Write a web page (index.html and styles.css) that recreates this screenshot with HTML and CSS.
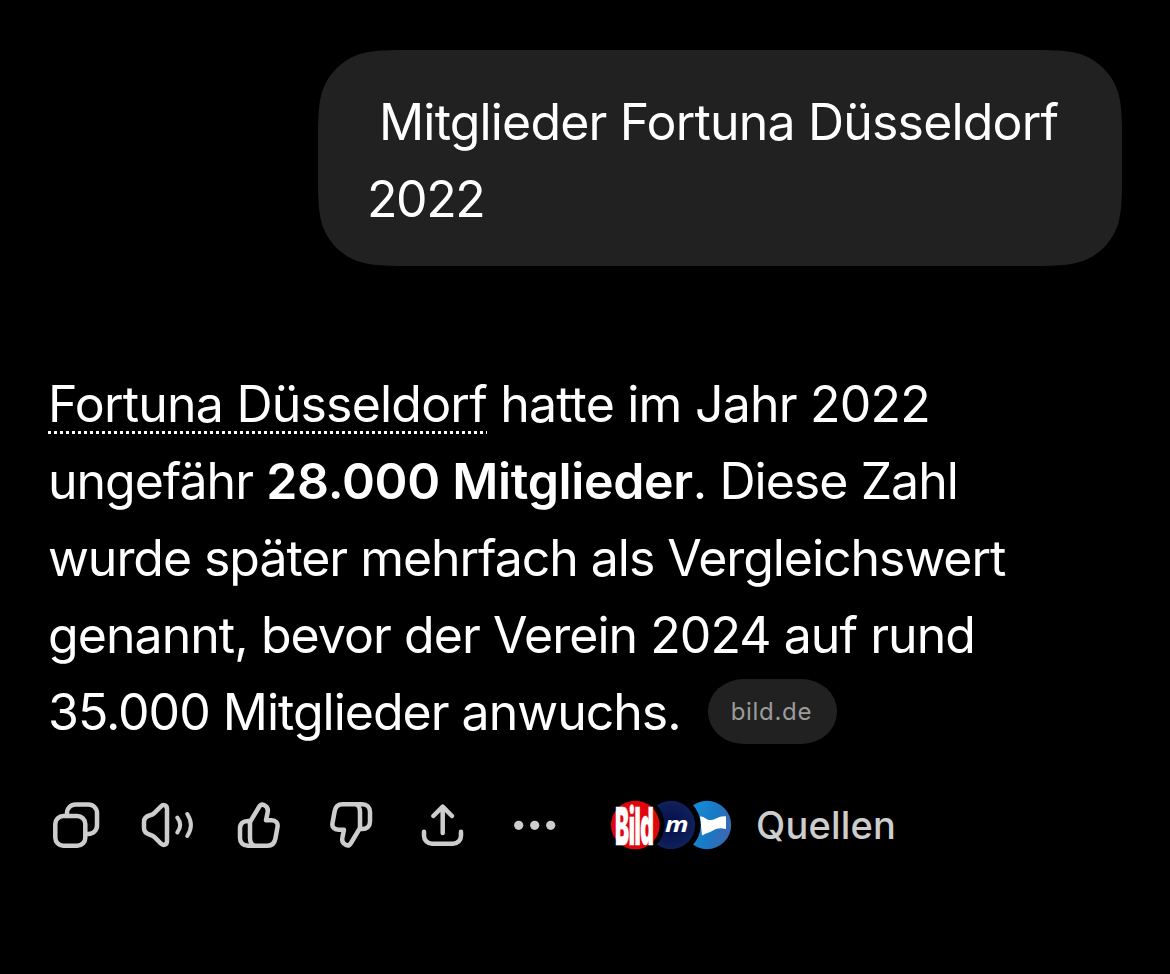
FILE: index.html
```html
<!DOCTYPE html>
<html lang="de">
<head>
    <meta charset="UTF-8">
    <title>Mitglieder Fortuna Düsseldorf 2022</title>
    <link rel="stylesheet" href="styles.css">
</head>
<body>
<div class="chat">
    <div class="question">
        <span class="line q1">Mitglieder Fortuna Düsseldorf</span>
        <span class="line q2">2022</span>
    </div>
    <div class="answer">
        <span class="line a1"><a class="entity">Fortuna Düsseldorf</a> hatte im Jahr 2022</span>
        <span class="line a2">ungefähr <b>28.000 Mitglieder</b>. Diese Zahl</span>
        <span class="line a3">wurde später mehrfach als Vergleichswert</span>
        <span class="line a4">genannt, bevor der Verein 2024 auf rund</span>
        <span class="line a5"><span>35.000 Mitglieder anwuchs.</span><a class="source">bild.de</a></span>
    </div>
    <div class="toolbar">
        <!-- copy -->
        <svg class="icon" viewBox="0 0 56 56">
            <rect x="7.3" y="19" width="30" height="29.7" rx="8"/>
            <path d="M19 19V16a8.5 8.5 0 0 1 8.5-8.5h13a8.5 8.5 0 0 1 8.5 8.5v12.5a8.5 8.5 0 0 1-8.5 8.5H38"/>
        </svg>
        <!-- read aloud -->
        <svg class="icon" viewBox="0 0 56 56">
            <path d="M27 12C27 8 23.5 6.8 20.5 9.8L14.5 15.8C13 17.3 12 17.8 10 18.3C6 19.3 4 21 4 25V31C4 35 6 36.7 10 37.7C12 38.2 13 38.7 14.5 40.2L20.5 46.2C23.5 49.2 27 48 27 44Z"/>
            <path class="wave" d="M37.3 20.5Q43 28 37.3 35.5M47.3 17Q54.5 28 47.3 39"/>
        </svg>
        <!-- thumbs up -->
        <svg class="icon" viewBox="0 0 56 56">
            <path d="M18 25L27 10C28.3 7.8 30 7 32 8C35.3 9.6 36.3 12.5 35.6 15.5L34 23.3H39.5C44 23.3 46.3 26 45.5 30L43.4 41.5C42.6 46 40 48.7 35.5 48.7H16C11 48.7 8 45.7 8 41V31.5C8 26.8 11 24 16 24H18V41C18 45 20 48.7 23.5 48.7"/>
        </svg>
        <!-- thumbs down -->
        <svg class="icon" viewBox="0 0 56 56">
            <path transform="rotate(180 27 28)" d="M18 25L27 10C28.3 7.8 30 7 32 8C35.3 9.6 36.3 12.5 35.6 15.5L34 23.3H39.5C44 23.3 46.3 26 45.5 30L43.4 41.5C42.6 46 40 48.7 35.5 48.7H16C11 48.7 8 45.7 8 41V31.5C8 26.8 11 24 16 24H18V41C18 45 20 48.7 23.5 48.7"/>
        </svg>
        <!-- share -->
        <svg class="icon" viewBox="0 0 56 56">
            <path d="M26.7 36V10M17.3 19L26.7 9.7L36 19M8 34.7V38.7A8 8 0 0 0 16 46.7H37A8 8 0 0 0 45 38.7V34.7"/>
        </svg>
        <!-- more -->
        <svg class="icon dots" viewBox="0 0 56 56">
            <circle cx="10.7" cy="28.3" r="4.6"/>
            <circle cx="26.7" cy="28.3" r="4.6"/>
            <circle cx="42.7" cy="28.3" r="4.6"/>
        </svg>
        <svg class="logos" viewBox="0 0 128 56">
            <defs>
                <linearGradient id="flagBg" x1="0" y1="0.3" x2="1" y2="0.6">
                    <stop offset="0" stop-color="#1593dc"/>
                    <stop offset="0.6" stop-color="#1879c6"/>
                    <stop offset="1" stop-color="#3f66b0"/>
                </linearGradient>
                <radialGradient id="mBg">
                    <stop offset="0" stop-color="#040d48"/>
                    <stop offset="1" stop-color="#10215c"/>
                </radialGradient>
            </defs>
            <circle cx="99" cy="28" r="24.2" fill="url(#flagBg)"/>
            <path fill="#fff" d="M92 19.5C97 19 98 23.5 103 23C109 22.5 111 18.5 118 19.5V32C113 30.5 109 31 105 33.5C101 36 98 36 94 38.5Z"/>
            <circle cx="63" cy="28" r="29.7" fill="#000"/>
            <circle cx="63" cy="28" r="24.2" fill="url(#mBg)"/>
            <text class="m-logo" x="57" y="35" textLength="23.5" lengthAdjust="spacingAndGlyphs">m</text>
            <circle cx="27.3" cy="28" r="29.2" fill="#000"/>
            <circle cx="27.3" cy="28" r="24.3" fill="#e1060d"/>
            <text class="bild-logo" transform="translate(7 47.5) scale(0.405 1)">Bild</text>
        </svg>
        <span class="sources">Quellen</span>
    </div>
</div>
</body>
</html>
```
FILE: styles.css
```css
*{
    margin: 0;
    padding: 0;
    box-sizing: border-box;
}
body{
    background-color: #000;
    color: #fff;
    font-family: Inter, "Liberation Sans", sans-serif;
    font-size: 50px;
    line-height: 77px;
}
.chat{
    display: flex;
    flex-direction: column;
    height: 974px;
    padding: 50px 48px 0;
    overflow: hidden;
}
.line{
    display: block;
    white-space: nowrap;
}
.question{
    align-self: flex-end;
    width: 804px;
    height: 216px;
    padding: 34px 49px 0;
    background-color: #212121;
    /*continuous corners*/
    clip-path: path("M96.3 0H707.7C735.4 0 749.3 0 764.2 4.7C780.5 10.7 793.3 23.5 799.3 39.8C804 54.7 804 68.6 804 96.3V119.7C804 147.4 804 161.3 799.3 176.2C793.3 192.5 780.5 205.3 764.2 211.3C749.3 216 735.4 216 707.7 216H96.3C68.6 216 54.7 216 39.8 211.3C23.5 205.3 10.7 192.5 4.7 176.2C0 161.3 0 147.4 0 119.7V96.3C0 68.6 0 54.7 4.7 39.8C10.7 23.5 23.5 10.7 39.8 4.7C54.7 0 68.6 0 96.3 0Z");
}
.q1{
    padding-left: 12px;
    letter-spacing: -0.82px;
}
.q2{
    letter-spacing: -1.4px;
}
.answer{
    margin-top: 100px;
}
.answer b{
    font-weight: 600;
    letter-spacing: -0.35px;
}
.a1{
    letter-spacing: -0.79px;
}
.a2{
    letter-spacing: -1.02px;
    word-spacing: 0.3px;
}
.a3{
    letter-spacing: -1.05px;
}
.a4{
    letter-spacing: -0.94px;
}
.a5{
    display: flex;
    align-items: center;
    letter-spacing: -1px;
}
.entity{
    background: repeating-linear-gradient(90deg, #fff 0 3px, transparent 3px 6px) 0 100% / 100% 3px no-repeat;
}
.source{
    width: 129px;
    height: 65px;
    margin: -2px 0 0 27px;
    padding-left: 23px;
    border-radius: 36px / 32px;
    background-color: #212121;
    color: #9b9b9b;
    font-size: 24px;
    line-height: 65px;
    letter-spacing: 0.7px;
}
.toolbar{
    display: flex;
    align-items: center;
    gap: 36px;
    height: 56px;
    margin-top: 46px;
}
.icon{
    flex: none;
    width: 56px;
    height: 56px;
    fill: none;
    stroke: #cdcdcd;
    stroke-width: 4.5;
    stroke-linecap: round;
    stroke-linejoin: round;
}
.wave{
    stroke-width: 4;
}
.dots{
    fill: #cdcdcd;
    stroke: none;
}
.logos{
    flex: none;
    width: 128px;
    height: 56px;
    margin-left: 8px;
    overflow: visible;
}
.m-logo{
    fill: #fff;
    font: italic bold 22px/1 "Open Sans", sans-serif;
}
.bild-logo{
    fill: #fff;
    stroke: #fff;
    stroke-width: 0.5;
    font: 900 52px/1 Inter, sans-serif;
    letter-spacing: -1px;
}
.sources{
    margin-left: -16px;
    color: #cdcdcd;
    font-size: 38px;
    font-weight: 500;
    line-height: 57px;
    letter-spacing: 0.2px;
}
```
